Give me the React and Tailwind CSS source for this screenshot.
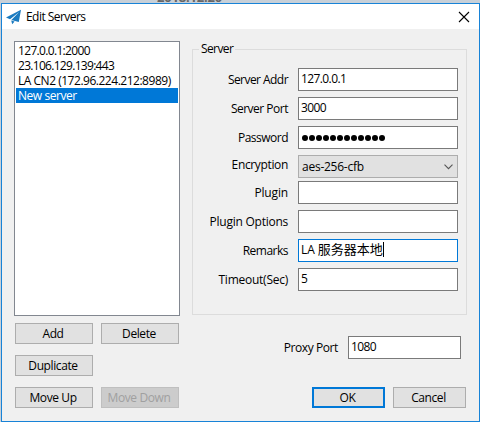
import React from "react";

const servers = [
  { name: "127.0.0.1:2000", tracking: "tracking-[-0.67px]" },
  { name: "23.106.129.139:443", tracking: "tracking-[-0.7px]" },
  { name: "LA CN2 (172.96.224.212:8989)", tracking: "tracking-[-0.48px]" },
  { name: "New server", tracking: "tracking-[-0.45px]", selected: true },
];

function Field({ label, gap, labelShift = "", tracking = "", children }) {
  return (
    <div className={`flex h-[23px] items-center ${gap}`}>
      <label className={`w-[96px] pr-[10px] text-right ${labelShift} ${tracking}`}>{label}</label>
      {children}
    </div>
  );
}

function Input({ children, border = "border-[#7a7a7a]", width = "w-[160px]" }) {
  return (
    <div className={`flex h-[23px] border bg-white pl-[2px] leading-[19px] tracking-[-0.6px] ${border} ${width}`}>{children}</div>
  );
}

function Button({ children, look = "border border-[#adadad] bg-[#e1e1e1]", width = "w-[78px]" }) {
  return (
    <button className={`flex h-[21px] shrink-0 items-center justify-center pr-[2px] leading-[17px] ${look} ${width}`}>{children}</button>
  );
}

export default function App() {
  return (
    <div className="flex h-[422px] w-[480px] flex-col overflow-hidden bg-[#c8d0d8] pl-px font-['Open_Sans','Noto_Sans_CJK_SC',sans-serif] text-[12px] tracking-[-0.4px] whitespace-nowrap text-black">
      <div className="h-[3px] overflow-hidden pl-[156px]">
        <div className="-mt-[11px] text-[13px] leading-[16px] font-bold tracking-[-0.2px] text-[#666]">2018.12.20</div>
      </div>
      <div className="flex h-[419px] flex-col border border-[#1883d7] bg-[#f0f0f0]">
        <header className="flex h-[25px] shrink-0 items-center bg-white pl-[4px]">
          <svg width="16" height="16" viewBox="0 0 16 16" fill="#1b7bc0">
            <path d="M15 .7 0 8.4 4 10.2 13.2 3 5.4 10.9 12.8 12.9zM5.2 11.6l3.4 1-2.4 2.6z" />
          </svg>
          <span className="ml-[4px] tracking-[-0.55px]">Edit Servers</span>
          <svg className="mr-[9px] ml-auto" width="12" height="12" viewBox="0 0 12 12" stroke="#000" strokeWidth="1.1">
            <path d="M1 1 11 11M11 1 1 11" />
          </svg>
        </header>
        <main className="flex h-[392px] pl-[12px]">
          <section className="w-[166px] pt-[12px]">
            <div className="h-[275px] border border-[#828790] bg-white p-px">
              {servers.map((s) => (
                <div key={s.name} className={`h-[15px] pl-[2px] leading-[15px] ${s.tracking} ${s.selected ? "bg-[#0078d7] text-white" : ""}`}>{s.name}</div>
              ))}
            </div>
            <div className="mt-[7px] grid grid-cols-[78px_78px] gap-x-[8px] gap-y-[11px] pl-px">
              <Button>Add</Button>
              <Button>Delete</Button>
              <div className="col-span-2"><Button>Duplicate</Button></div>
              <Button>Move Up</Button>
              <Button look="border border-[#bfbfbf] bg-[#cccccc] text-[#a0a0a0]">Move Down</Button>
            </div>
          </section>
          <section className="ml-[12px] w-[275px] pt-[12px]">
            <fieldset className="relative mt-[8px] h-[266px] border border-[#dcdcdc] pt-[18px] pl-[9px]">
              <span className="absolute top-[-9px] left-[6px] bg-[#f0f0f0] px-[2px] leading-[16px] tracking-[-0.6px]">Server</span>
              <Field label="Server Addr" gap="mb-[6px]" tracking="tracking-[-0.55px]"><Input>127.0.0.1</Input></Field>
              <Field label="Server Port" gap="mb-[6px]" tracking="tracking-[-0.5px]"><Input>3000</Input></Field>
              <Field label="Password" gap="mb-[6px]" tracking="tracking-[-0.5px]">
                <Input>
                  <span className="flex items-center gap-px pl-px">
                    {Array.from({ length: 12 }, (_, i) => <i key={i} className="size-[6px] rounded-full bg-black" />)}
                  </span>
                </Input>
              </Field>
              <Field label="Encryption" gap="mb-[3px]" labelShift="pb-[3px]" tracking="tracking-[-0.35px]">
                <div className="flex h-[23px] w-[160px] items-center justify-between border border-[#adadad] bg-[#e1e1e1] pr-[4px] pl-[3px]">
                  <span className="tracking-[-0.25px]">aes-256-cfb</span>
                  <svg width="9" height="6" viewBox="0 0 9 6" fill="none" stroke="#555" strokeWidth="1.1"><path d="m.5.7 4 4 4-4" /></svg>
                </div>
              </Field>
              <Field label="Plugin" gap="mb-[6px]" tracking="tracking-[-0.15px]"><Input /></Field>
              <Field label="Plugin Options" gap="mb-[6px]" tracking="tracking-[-0.25px]"><Input /></Field>
              <Field label="Remarks" gap="mb-[6px]" tracking="tracking-[-0.5px]">
                <Input border="border-[#0078d7]">
                  <span><span className="tracking-[-0.1px]">LA </span><span className="text-[13px] tracking-normal">服务器本地</span></span>
                  <i className="mt-[2px] h-[15px] w-px bg-black" />
                </Input>
              </Field>
              <Field label="Timeout(Sec)" gap="" tracking="tracking-[-0.25px]"><Input>5</Input></Field>
            </fieldset>
            <div className="mt-[21px] flex items-center justify-end pr-[6px]">
              <label className="mr-[10px]">Proxy Port</label>
              <Input width="w-[113px]">1080</Input>
            </div>
            <div className="mt-[28px] flex justify-end gap-[8px] pr-px">
              <Button width="w-[73px]" look="border-2 border-[#0078d7] bg-[#e1e1e1]">OK</Button>
              <Button width="w-[73px]">Cancel</Button>
            </div>
          </section>
        </main>
      </div>
    </div>
  );
}
